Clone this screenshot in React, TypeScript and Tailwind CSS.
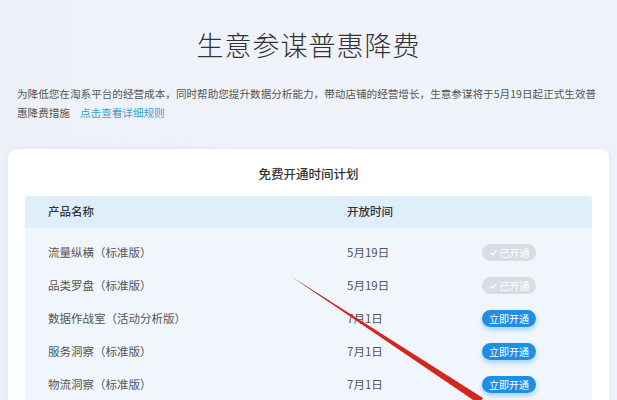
const rows = [
  { name: "流量纵横（标准版）", date: "5月19日", opened: true },
  { name: "品类罗盘（标准版）", date: "5月19日", opened: true },
  { name: "数据作战室（活动分析版）", date: "7月1日", opened: false },
  { name: "服务洞察（标准版）", date: "7月1日", opened: false },
  { name: "物流洞察（标准版）", date: "7月1日", opened: false },
];

const font = { fontFamily: '"Noto Sans CJK SC", "Liberation Sans", sans-serif' };

const StatusButton = ({ opened }: { opened: boolean }) =>
  opened ? (
    <span className="flex h-[17px] w-[54px] items-center justify-center gap-[2px] rounded-full bg-[#d9dde3] text-[10px] text-white">
      <svg viewBox="0 0 12 12" className="h-[9px] w-[9px]" fill="none" stroke="currentColor" strokeWidth="1.6">
        <path d="M2 6.5l2.6 2.6L10 3.5" />
      </svg>
      已开通
    </span>
  ) : (
    <span className="flex h-[17px] w-[54px] items-center justify-center rounded-full bg-[#1f8fe5] text-[10px] text-white shadow-[0_3px_5px_rgba(31,143,229,0.35)]">
      立即开通
    </span>
  );

export default function App() {
  return (
    <div
      className="relative h-[400px] w-[617px] overflow-hidden bg-gradient-to-r from-[#eef1f8] via-[#f0f3f9] to-[#eef3fb]"
      style={font}
    >
      <div className="flex flex-col items-center pt-[28px]">
        <h1 className="text-[27px] font-light leading-[34px] tracking-[1px] text-[#333]">生意参谋普惠降费</h1>
      </div>

      <div className="mt-[22px] px-[17px] text-[10.6px] leading-[19px] text-[#555]">
        <p className="whitespace-nowrap">
          为降低您在淘系平台的经营成本，同时帮助您提升数据分析能力，带动店铺的经营增长，生意参谋将于5月19日起正式生效普
        </p>
        <p className="whitespace-nowrap">
          惠降费措施
          <span className="ml-[10px] text-[#3d9fcb]">点击查看详细规则</span>
        </p>
      </div>

      <div className="mx-[8px] mt-[27px] rounded-[8px] bg-white px-[17px] pb-4 pt-[16px] shadow-[0_0_6px_rgba(180,195,220,0.25)]">
        <h2 className="text-center text-[12.5px] font-medium leading-[18px] text-[#333]">免费开通时间计划</h2>

        <div className="mt-[13px] overflow-hidden rounded-t-[4px] bg-[#f1f6fd]">
          <div className="flex h-[32px] items-center bg-[#dfeefb] text-[11.5px] font-medium text-[#333]">
            <span className="w-[322px] pl-[23px]">产品名称</span>
            <span>开放时间</span>
          </div>
          <div className="pt-[8px]">
            {rows.map(row => (
              <div key={row.name} className="flex h-[33px] items-center text-[11.5px] text-[#555]">
                <span className="w-[322px] pl-[23px]">{row.name}</span>
                <span className="w-[135px]">{row.date}</span>
                <StatusButton opened={row.opened} />
              </div>
            ))}
          </div>
        </div>
      </div>

      {/* red arrow drawn over the table */}
      <svg className="pointer-events-none absolute inset-0" width="617" height="400" viewBox="0 0 617 400">
        <polygon points="292,277 483,398 479,404" fill="#d3261d" />
        <polygon points="292,277 330,301.5 329,302" fill="#7a2a24" opacity="0.6" />
      </svg>
    </div>
  );
}
